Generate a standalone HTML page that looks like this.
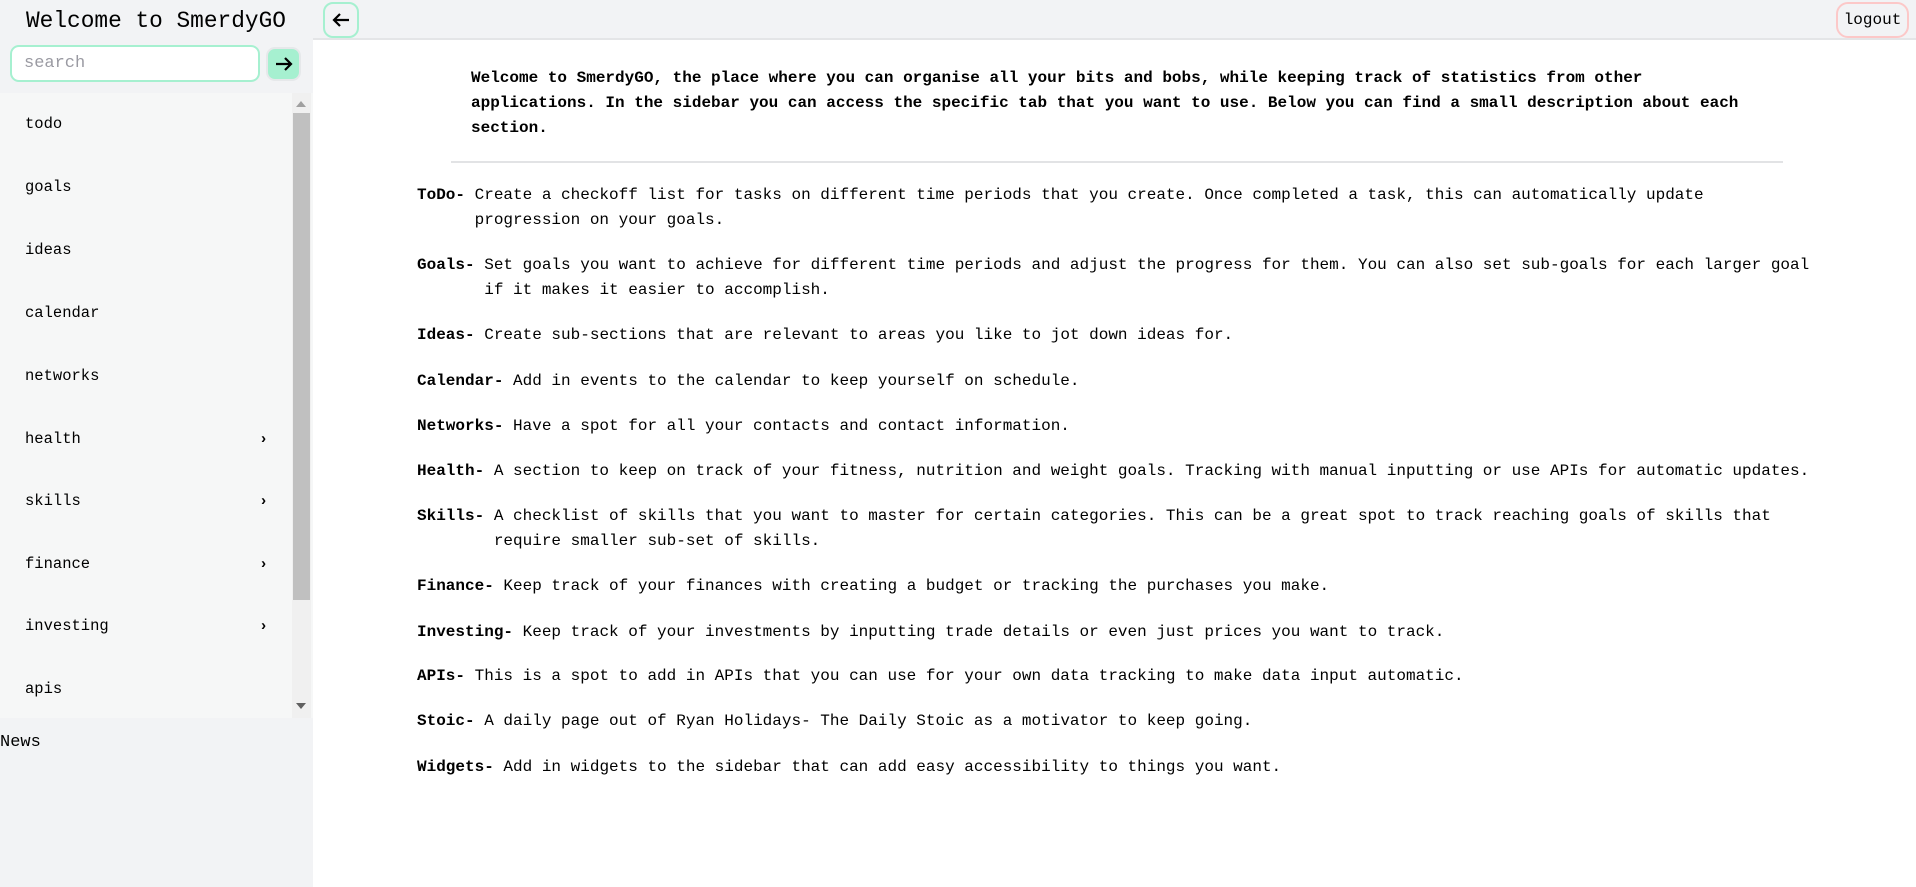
<!DOCTYPE html>
<html><head><style>
*{margin:0;padding:0;box-sizing:border-box}
body{width:1916px;height:887px;overflow:hidden;background:#fff;font-family:"Liberation Mono",monospace;color:#000;position:relative}
#side{position:absolute;left:0;top:0;width:313px;height:887px;background:#f2f3f5}
#title{position:absolute;left:26px;top:8px;font-size:22.8px}
#search{position:absolute;left:10px;top:45px;width:250px;height:37px;border:2px solid #a6f0d0;border-radius:9px;background:#fff;font-size:17px;color:#9a9aa2;padding:7px 12px}
#go{position:absolute;left:266px;top:47px;width:35px;height:34px;border-radius:9px;background:#a6f0d0;border:2px solid #e6e8ea}
#nav{position:absolute;left:0;top:93px;width:313px;height:625px;background:#f6f7f7}
.it{position:absolute;left:25px;font-size:15.5px}
.chev{position:absolute;left:259px;font-size:15px;font-weight:bold}
#sb{position:absolute;left:292px;top:0;width:19px;height:625px;background:#f0f0f0}
#thumb{position:absolute;left:293px;top:20px;width:17px;height:487px;background:#c0c0c0}
#news{position:absolute;left:0;top:733px;font-size:17px}
#top{position:absolute;left:313px;top:0;right:0;height:40px;background:#f2f3f5;border-bottom:2px solid #e4e5e7}
#back{position:absolute;left:323px;top:2px;width:36px;height:36px;border:2px solid #a6f0d0;border-radius:10px}
#logout{position:absolute;left:1836px;top:2px;width:73px;height:36px;border:2px solid #fcc8c8;border-radius:12px;font-size:16px;padding-top:7px;text-align:center}
#intro{position:absolute;left:471px;top:66px;font-size:16px;font-weight:bold;line-height:25px;white-space:nowrap}
#hr{position:absolute;left:451px;top:161px;width:1332px;height:2px;background:#e2e3e5}
.r{position:absolute;left:417px;font-size:16px;line-height:25px;display:flex;white-space:pre}
.r b{white-space:pre}
</style></head><body>
<div id="side">
<div id="title">Welcome to SmerdyGO</div>
<div id="search">search</div>
<div id="go"><svg width="31" height="30" viewBox="0 0 31 30"><path d="M8 15h15M17 9l6 6-6 6" stroke="#000" stroke-width="2.2" fill="none"/></svg></div>
<div id="nav">
<div class="it" style="top:22px">todo</div>
<div class="it" style="top:85px">goals</div>
<div class="it" style="top:148px">ideas</div>
<div class="it" style="top:211px">calendar</div>
<div class="it" style="top:274px">networks</div>
<div class="it" style="top:337px">health</div><div class="chev" style="top:338px">›</div>
<div class="it" style="top:399px">skills</div><div class="chev" style="top:400px">›</div>
<div class="it" style="top:462px">finance</div><div class="chev" style="top:463px">›</div>
<div class="it" style="top:524px">investing</div><div class="chev" style="top:525px">›</div>
<div class="it" style="top:587px">apis</div>
<div id="sb"></div><div id="thumb"></div>
<svg style="position:absolute;left:296px;top:8px" width="10" height="6"><path d="M0 6L5 0 10 6z" fill="#a0a0a0"/></svg>
<svg style="position:absolute;left:296px;top:610px" width="10" height="6"><path d="M0 0L5 6 10 0z" fill="#606060"/></svg>
</div>
<div id="news">News</div>
</div>
<div id="top"></div>
<div id="back"><svg width="32" height="32" viewBox="0 0 32 32"><path d="M24 16H9M15 10l-6 6 6 6" stroke="#000" stroke-width="2.2" fill="none"/></svg></div>
<div id="logout">logout</div>
<div id="intro">Welcome to SmerdyGO, the place where you can organise all your bits and bobs, while keeping track of statistics from other<br>applications. In the sidebar you can access the specific tab that you want to use. Below you can find a small description about each<br>section.</div>
<div id="hr"></div>
<div class="r" style="top:183px"><b>ToDo- </b><span>Create a checkoff list for tasks on different time periods that you create. Once completed a task, this can automatically update
progression on your goals.</span></div>
<div class="r" style="top:253px"><b>Goals- </b><span>Set goals you want to achieve for different time periods and adjust the progress for them. You can also set sub-goals for each larger goal
if it makes it easier to accomplish.</span></div>
<div class="r" style="top:323px"><b>Ideas- </b><span>Create sub-sections that are relevant to areas you like to jot down ideas for.</span></div>
<div class="r" style="top:369px"><b>Calendar- </b><span>Add in events to the calendar to keep yourself on schedule.</span></div>
<div class="r" style="top:414px"><b>Networks- </b><span>Have a spot for all your contacts and contact information.</span></div>
<div class="r" style="top:459px"><b>Health- </b><span>A section to keep on track of your fitness, nutrition and weight goals. Tracking with manual inputting or use APIs for automatic updates.</span></div>
<div class="r" style="top:504px"><b>Skills- </b><span>A checklist of skills that you want to master for certain categories. This can be a great spot to track reaching goals of skills that
require smaller sub-set of skills.</span></div>
<div class="r" style="top:574px"><b>Finance- </b><span>Keep track of your finances with creating a budget or tracking the purchases you make.</span></div>
<div class="r" style="top:620px"><b>Investing- </b><span>Keep track of your investments by inputting trade details or even just prices you want to track.</span></div>
<div class="r" style="top:664px"><b>APIs- </b><span>This is a spot to add in APIs that you can use for your own data tracking to make data input automatic.</span></div>
<div class="r" style="top:709px"><b>Stoic- </b><span>A daily page out of Ryan Holidays- The Daily Stoic as a motivator to keep going.</span></div>
<div class="r" style="top:755px"><b>Widgets- </b><span>Add in widgets to the sidebar that can add easy accessibility to things you want.</span></div>
</body></html>
